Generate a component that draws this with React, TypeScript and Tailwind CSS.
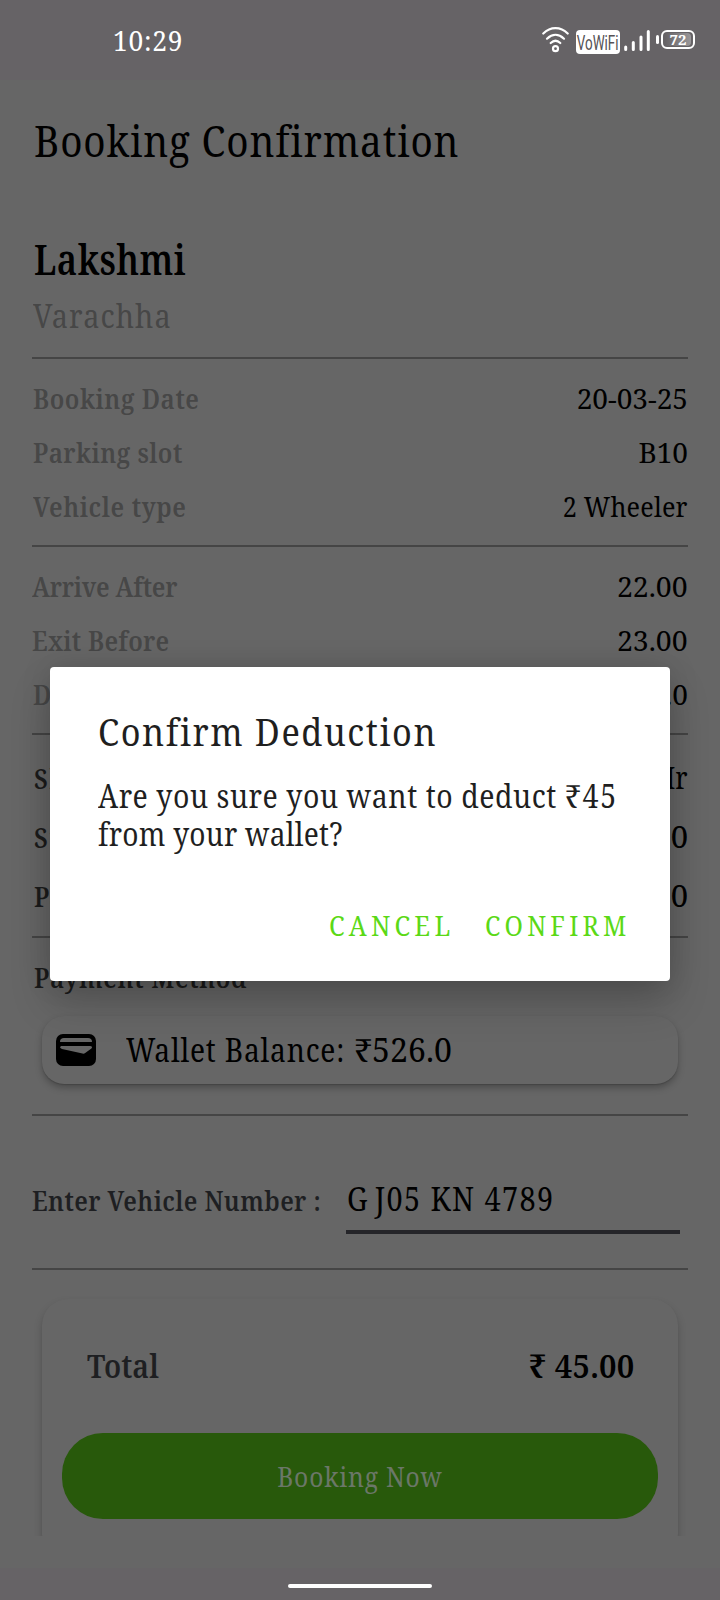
import type { ReactNode } from "react";

const line = "h-0.5 w-full shrink-0 bg-[#454545]";
const label = "inline-block origin-left scale-x-[.87] text-[28px] font-semibold";
const value = "inline-block origin-right text-[28px] text-black";

function Row({ children, tall = false }: { children: ReactNode; tall?: boolean }) {
  return <div className={`flex items-center justify-between ${tall ? "h-[59px]" : "h-[54px]"}`}>{children}</div>;
}

function StatusBar() {
  return (
    <header className="flex h-20 shrink-0 items-start justify-between bg-[#666366] pl-[113px] pr-[25px] text-white">
      <span className="mt-[26px] inline-block origin-left scale-x-[.94] text-[28px] leading-[28px] tracking-[.8px]">10:29</span>
      <div className="flex items-start pt-[27px]">
        <svg className="mr-[7px] h-[26px] w-[27px]" viewBox="0 0 27 26" fill="none" stroke="#fff" strokeWidth="2.2" strokeLinecap="round">
          <path d="M1.3 6.500C8.500-.7 18.500-.7 25.700 6.500" />
          <path d="M5 11.700c5.300-5 11.700-5 17 0" />
          <path d="M8.700 16c3-2.800 6.600-2.800 9.600 0" />
          <circle cx="13.500" cy="21.700" r="2.500" />
        </svg>
        <div className="mt-[3px] flex h-[24px] w-11 items-center justify-center rounded bg-white">
          <span className="inline-block scale-x-[.64] pt-[3px] font-[Roboto] text-[21px] leading-none text-[#555255]">VoWiFi</span>
        </div>
        <svg className="ml-1 mt-[3px] h-[22px] w-[26px]" viewBox="0 0 26 22" stroke="#fff" strokeWidth="3" strokeLinecap="round">
          <path d="M1.700 17v2.500M9.300 12.500v7M17 7v12.500M24.300 1.500v18" />
        </svg>
        <div className="ml-[6px] mt-2 h-[9px] w-[3px] rounded-full bg-white" />
        <div className="ml-[2px] mt-[3px] flex h-[19px] w-[34px] items-center justify-center rounded-[6px] border-2 border-white">
          <span className="rounded-sm bg-linear-to-r from-[#666366] to-[#9a989a] px-[5px] text-[15px] font-bold leading-[13px]">72</span>
        </div>
      </div>
    </header>
  );
}

export default function App() {
  return (
    <div className="relative flex h-[1600px] w-[720px] flex-col overflow-hidden whitespace-nowrap bg-[#666666] font-['Noto_Serif','DejaVu_Serif_Condensed',serif] leading-none text-black">
      <StatusBar />
      <main className="flex h-[1456px] shrink-0 flex-col overflow-hidden px-8">
        <div className="flex h-[120px] shrink-0 items-center">
          <h1 className="ml-[2px] origin-left scale-x-[.88] text-[44px] tracking-[.95px]">Booking Confirmation</h1>
        </div>
        <div className="mt-[29px] flex h-[60px] shrink-0 items-center">
          <h2 className="ml-[2px] origin-left scale-x-[.85] text-[41px] font-semibold tracking-[.5px]">Lakshmi</h2>
        </div>
        <div className="mb-[15px] flex h-[53px] shrink-0 items-center">
          <span className="ml-px inline-block origin-left scale-x-[.9] text-[32px] tracking-[1.200px] text-[#474747]">Varachha</span>
        </div>

        <div className={line} />
        <section className="shrink-0 py-3 text-[#474747]">
          <Row><span className={`${label} ml-px tracking-[.6px]`}>Booking Date</span><span className={value}>20-03-25</span></Row>
          <Row><span className={`${label} ml-px tracking-[.5px]`}>Parking slot</span><span className={value}>B10</span></Row>
          <Row><span className={`${label} ml-px tracking-[.7px]`}>Vehicle type</span><span className={`${value} scale-x-[.9] tracking-[.2px]`}>2 Wheeler</span></Row>
        </section>

        <div className={line} />
        <section className="shrink-0 py-3 text-[#474747]">
          <Row><span className={`${label} tracking-[-.25px]`}>Arrive After</span><span className={`${value} scale-x-[1.015]`}>22.00</span></Row>
          <Row><span className={`${label} tracking-[.3px]`}>Exit Before</span><span className={`${value} scale-x-[1.015]`}>23.00</span></Row>
          <Row><span className={`${label} ml-px`}>Duration</span><span className={value}>1.0</span></Row>
        </section>

        <div className={line} />
        <section className="shrink-0 pb-[11px] pt-[13px] text-[#1b1b1b]">
          <Row tall><span className={`${label} ml-[2px] tracking-[2px]`}>Slot Type</span><span className="inline-block origin-right scale-x-[.84] text-[31px] text-black">1 Hr</span></Row>
          <Row tall><span className={`${label} ml-[2px] tracking-[2px]`}>Sub Total</span><span className="text-[31px] text-black">45.00</span></Row>
          <Row tall><span className={`${label} ml-[2px]`}>Payable</span><span className="text-[31px] text-black">45.00</span></Row>
        </section>

        <div className={line} />
        <div className="flex h-[78px] shrink-0 items-center">
          <span className={`${label} ml-[2px] tracking-[.75px] text-[#1b1b1b]`}>Payment Method</span>
        </div>
        <div className="mb-[30px] ml-[9.500px] mr-[10.500px] flex h-[68px] shrink-0 items-center rounded-[22px] bg-[#666666] pl-[14.500px] shadow-[0_4px_7px_rgba(0,0,0,.26),0_1px_1px_rgba(0,0,0,.14)]">
          <svg className="h-8 w-10" viewBox="0 0 40 32">
            <rect width="40" height="32" rx="7" fill="#000" />
            <path d="M4 8c0-3 1.500-4 4-4h24c2.500 0 4 1 4 4zM5 12h29c2.300 0 2.500 1.500 1.400 2.600l-6.200 4.500q-1.200.9-2.700.5L6 15Q4.500 14.500 4 13.200z" fill="#666" />
          </svg>
          <span className="ml-[30px] inline-block text-[32px]">
            <span className="inline-block w-[228px] origin-left scale-x-[.88] tracking-[.9px]">Wallet Balance:</span>
            <span className="inline-block origin-left tracking-[.1px]">₹526.0</span>
          </span>
        </div>

        <div className={line} />
        <div className="flex h-[152px] shrink-0 justify-between pr-2 pt-16">
          <span className={`${label} h-10 w-[300px] leading-10 tracking-[.45px] text-[#1e1f22]`}>Enter Vehicle Number :</span>
          <div className="h-[54px] w-[334px] border-b-4 border-[#252529] pl-px">
            <span className="inline-block origin-left scale-x-[.9] text-[32px] leading-[38px] tracking-[1.600px]"><span className="tracking-[8px]">G</span>J05 KN 4789</span>
          </div>
        </div>

        <div className={line} />
        <section className="ml-[9.500px] mr-[10.500px] mt-[29px] flex h-[260px] shrink-0 flex-col rounded-[26px] bg-[#666666] px-5 shadow-[0_5px_8px_rgba(0,0,0,.2),0_1px_1px_rgba(0,0,0,.08)]">
          <div className="flex h-[134px] items-center justify-between pb-[2px] pl-[25px] pr-[23px]">
            <span className="inline-block origin-left scale-x-[.87] text-[33px] font-semibold text-[#1e1f22]">Total</span>
            <span className="inline-block origin-right scale-x-[.94] text-[33px] font-semibold tracking-[.3px]">₹ 45.00</span>
          </div>
          <button className="h-[86px] shrink-0 rounded-[41px] bg-[#28590b] text-[#6b7768]">
            <span className="inline-block scale-x-[.88] pl-px text-[28px] tracking-[.9px]">Booking Now</span>
          </button>
        </section>
      </main>

      <footer className="mt-8 flex h-8 justify-center bg-[#666366] pt-4">
        <div className="h-1 w-36 rounded-full bg-white" />
      </footer>

      <div className="absolute left-[50px] top-[667px] flex h-[314px] w-[620px] flex-col rounded bg-white text-[#1f1f1f] shadow-[0_22px_40px_rgba(0,0,0,.2),0_0_30px_rgba(0,0,0,.13)]">
        <div className="mt-[38px] flex h-[50px] items-center pl-[48px]">
          <h3 className="origin-left scale-x-[.88] text-[39px] tracking-[1.800px]">Confirm Deduction</h3>
        </div>
        <p className="mt-[22px] pl-[48px] text-[32px] leading-[38px]">
          <span className="block origin-left scale-x-[.89] tracking-[.62px]">Are you sure you want to deduct <span className="tracking-[2px]">₹45</span></span>
          <span className="block origin-left scale-x-[.88] tracking-[.3px]">from your wallet?</span>
        </p>
        <div className="mt-[55px] flex h-9 text-[27px] leading-9 text-[#5bd916]">
          <button className="ml-[279px] h-9 w-[156px] text-left"><span className="inline-block origin-left scale-x-[.94] tracking-[4.500px]">CANCEL</span></button>
          <button className="h-9 text-left"><span className="inline-block origin-left scale-x-[.92] tracking-[4.600px]">CONFIRM</span></button>
        </div>
      </div>
    </div>
  );
}
